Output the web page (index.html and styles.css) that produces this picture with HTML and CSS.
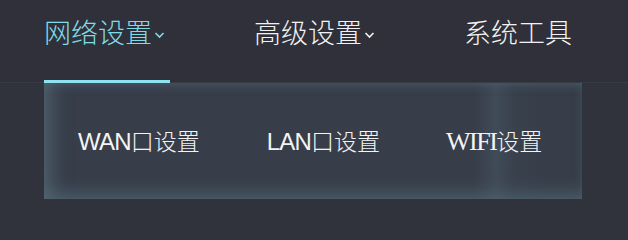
FILE: index.html
```html
<!DOCTYPE html>
<html lang="zh">
<head>
<meta charset="utf-8">
<title>菜单</title>
<link rel="stylesheet" href="styles.css">
</head>
<body>
<nav class="nav">
  <div class="nav-item active">网络设置<span class="chev"><svg width="11" height="8" viewBox="0 0 11 8"><path d="M1.5 2 L5.5 6 L9.5 2" fill="none" stroke="currentColor" stroke-width="1.6"/></svg></span></div>
  <div class="nav-item">高级设置<span class="chev"><svg width="11" height="8" viewBox="0 0 11 8"><path d="M1.5 2 L5.5 6 L9.5 2" fill="none" stroke="currentColor" stroke-width="1.6"/></svg></span></div>
  <div class="nav-item">系统工具</div>
</nav>
<div class="row">
  <div class="dropdown">
    <div class="sub"><span class="latin">WAN</span>口设置</div>
    <div class="sub"><span class="latin">LAN</span>口设置</div>
    <div class="sub"><span class="latin serif">WIFI</span>设置</div>
  </div>
</div>
</body>
</html>
```
FILE: styles.css
```css
html, body {
  margin: 0;
  padding: 0;
}
body {
  width: 628px;
  height: 214px;
  background: #30323c;
  font-family: "Noto Sans CJK SC", "Noto Sans", sans-serif;
  overflow: hidden;
}
.nav {
  display: flex;
  align-items: stretch;
  height: 83px;
  padding-left: 44px;
  gap: 84px;
  background: #2f3039;
  box-sizing: border-box;
}
.nav-item {
  display: flex;
  align-items: center;
  height: 83px;
  box-sizing: border-box;
  padding-bottom: 17px;
  padding-right: 5px;
  font-size: 27px;
  font-weight: 300;
  color: #f2f2f2;
  border-bottom: 3px solid transparent;
}
.nav-item.active {
  color: #7fdbe6;
  border-bottom-color: #8fe2f0;
}
.chev {
  display: inline-flex;
  margin-left: 2px;
  margin-top: 6px;
}
.row {
  padding-left: 44px;
  border-top: 1px solid #383c46;
  margin-top: -1px;
}
.dropdown {
  width: 538px;
  height: 116px;
  display: flex;
  align-items: center;
  padding-left: 34px;
  box-sizing: border-box;
  background:
    linear-gradient(90deg, rgba(0,0,0,0) 0px, rgba(0,0,0,0) 430px, rgba(80,100,112,0.35) 452px, rgba(80,100,112,0.08) 470px, rgba(0,0,0,0) 500px),
    #373e4a;
  box-shadow: inset 16px 0 18px -8px rgba(85,108,120,0.7), inset 0 -16px 16px -8px rgba(80,100,112,0.65), inset 0 8px 10px -6px rgba(80,100,112,0.55), inset -4px 0 8px -4px rgba(80,100,112,0.4);
}
.sub {
  font-size: 23px;
  font-weight: 300;
  color: #f4f4f4;
  white-space: nowrap;
  padding-bottom: 2px;
}
.sub + .sub {
  margin-left: 67px;
}
.sub:last-child {
  margin-left: 66px;
}
.latin {
  font-family: "Liberation Sans", Arial, sans-serif;
  font-weight: 400;
  font-size: 24px;
  letter-spacing: -0.8px;
}
.latin.serif {
  font-family: "Liberation Serif", serif;
  font-size: 26px;
  letter-spacing: -1.5px;
}
```
